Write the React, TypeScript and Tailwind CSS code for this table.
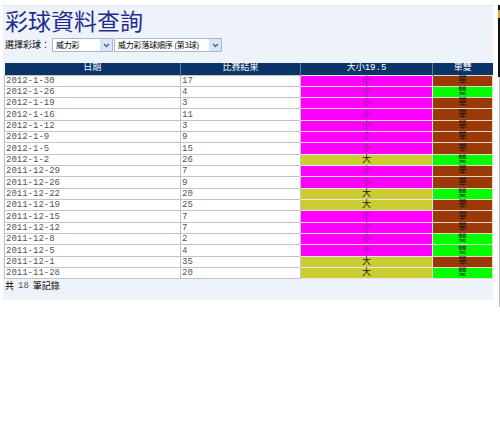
import React from "react";

type Row = { date: string; num: number; size: "大" | "小"; parity: "單" | "雙" };

const rows: Row[] = [
  { date: "2012-1-30", num: 17, size: "小", parity: "單" },
  { date: "2012-1-26", num: 4, size: "小", parity: "雙" },
  { date: "2012-1-19", num: 3, size: "小", parity: "單" },
  { date: "2012-1-16", num: 11, size: "小", parity: "單" },
  { date: "2012-1-12", num: 3, size: "小", parity: "單" },
  { date: "2012-1-9", num: 9, size: "小", parity: "單" },
  { date: "2012-1-5", num: 15, size: "小", parity: "單" },
  { date: "2012-1-2", num: 26, size: "大", parity: "雙" },
  { date: "2011-12-29", num: 7, size: "小", parity: "單" },
  { date: "2011-12-26", num: 9, size: "小", parity: "單" },
  { date: "2011-12-22", num: 20, size: "大", parity: "雙" },
  { date: "2011-12-19", num: 25, size: "大", parity: "單" },
  { date: "2011-12-15", num: 7, size: "小", parity: "單" },
  { date: "2011-12-12", num: 7, size: "小", parity: "單" },
  { date: "2011-12-8", num: 2, size: "小", parity: "雙" },
  { date: "2011-12-5", num: 4, size: "小", parity: "雙" },
  { date: "2011-12-1", num: 35, size: "大", parity: "單" },
  { date: "2011-11-28", num: 20, size: "大", parity: "雙" },
];

const font = "font-['Liberation_Mono','Noto_Sans_CJK_TC',monospace]";

function FakeSelect({ label, width }: { label: string; width: string }) {
  return (
    <div className={`${width} h-[14px] flex items-stretch bg-white border border-[#a5b9d6]`}>
      <span className="flex-1 pl-[3px] text-[8px] leading-[12px] tracking-[-0.2px] text-black font-['Noto_Sans_CJK_TC',sans-serif] whitespace-nowrap overflow-hidden">
        {label}
      </span>
      <span className="w-[12px] shrink-0 bg-[#dbe5f8] flex items-center justify-center">
        <svg width="7" height="5" viewBox="0 0 7 5">
          <path d="M1 1 L3.5 3.5 L6 1" stroke="#4d6185" strokeWidth="1.4" fill="none" />
        </svg>
      </span>
    </div>
  );
}

export default function App() {
  return (
    <div className="w-[500px] h-[447px] bg-white relative overflow-hidden">
      <div className="ml-[3px] mt-[5px] w-[490px] h-[295px] bg-[#eef3fa] border-t border-[#e2e8f0]">
        <div className="pl-[2px] h-[29px] text-[23px] leading-[28px] text-[#1f2e8e] font-['Noto_Sans_CJK_TC',serif]">
          彩球資料查詢
        </div>
        <div className="mt-[3px] ml-[2px] flex items-center gap-[1px]">
          <span className="text-[9px] leading-[14px] text-black font-['Noto_Sans_CJK_TC',sans-serif] mr-[1px]">
            選擇彩球：
          </span>
          <FakeSelect label="威力彩" width="w-[61px]" />
          <FakeSelect label="威力彩落球順序 (第3球)" width="w-[108px]" />
        </div>
        <table className={`mt-[11px] ml-[1px] w-[488px] border-collapse table-fixed text-[9px] ${font}`}>
          <colgroup>
            <col className="w-[176px]" />
            <col className="w-[120px]" />
            <col className="w-[132px]" />
            <col className="w-[60px]" />
          </colgroup>
          <thead>
            <tr className="h-[12px] bg-[#0b3468] text-white">
              <th className="font-normal leading-[11px] border-r border-[#5c7aa0] p-0">日期</th>
              <th className="font-normal leading-[11px] border-r border-[#5c7aa0] p-0">比賽結果</th>
              <th className="font-normal leading-[11px] border-r border-[#5c7aa0] p-0">大小19.5</th>
              <th className="font-normal leading-[11px] p-0">單雙</th>
            </tr>
          </thead>
          <tbody>
            {rows.map((r) => (
              <tr key={r.date} className="h-[11.33px]">
                <td className="bg-white border border-[#c4c4c4] pl-[1px] p-0 leading-[10px] text-[#555]">{r.date}</td>
                <td className="bg-white border border-[#c4c4c4] pl-[1px] p-0 leading-[10px] text-[#555]">{r.num}</td>
                <td
                  className={`border border-[#f3e3f0] p-0 text-center leading-[10px] ${
                    r.size === "小" ? "bg-[#ff00ff] text-[#8c1a8c]" : "bg-[#cccc33] text-[#222]"
                  }`}
                >
                  {r.size}
                </td>
                <td
                  className={`border border-[#e8d8c8] p-0 text-center leading-[10px] ${
                    r.parity === "單" ? "bg-[#9b3a08] text-[#111]" : "bg-[#00ff00] text-[#224422]"
                  }`}
                >
                  {r.parity}
                </td>
              </tr>
            ))}
          </tbody>
        </table>
        <div className="ml-[2px] mt-[1px] flex items-center gap-[4px] text-[9px] leading-[12px] text-black font-['Noto_Sans_CJK_TC',sans-serif]">
          <span>共</span>
          <span className={`${font} text-[#555]`}>18</span>
          <span>筆記錄</span>
        </div>
      </div>
      <div className="absolute left-[498px] top-[5px] w-[2px] h-[72px] bg-[#111]" />
      <div className="absolute left-[498px] top-[10px] w-[2px] h-[8px] bg-[#e0a040]" />
      <div className="absolute left-[499px] top-[77px] w-[1px] h-[230px] bg-[#bbb]" />
    </div>
  );
}
